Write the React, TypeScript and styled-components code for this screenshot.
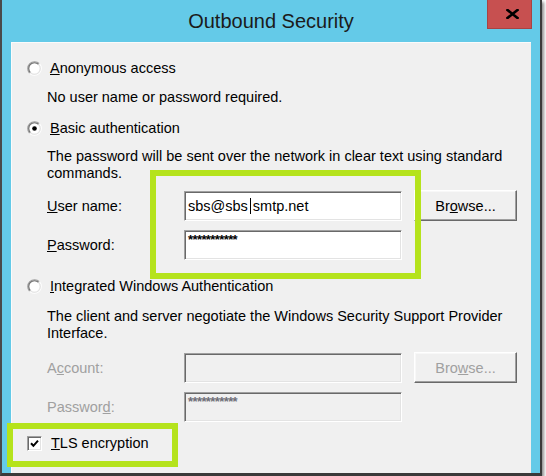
import React from "react";
import styled, { createGlobalStyle } from "styled-components";

const GlobalStyle = createGlobalStyle`
  html, body { margin: 0; padding: 0; background: #ffffff; }
  body { font-family: "Liberation Sans", Arial, sans-serif; }
  * { box-sizing: border-box; }
`;

const Page = styled.div`
  position: relative;
  width: 546px;
  height: 476px;
  overflow: hidden;
  background: #ffffff;
`;

const Window = styled.div`
  width: 542px;
  height: 476px;
  display: flex;
  flex-direction: column;
  background: #64cae8;
  border-left: 2px solid #4a4a4a;
  border-right: 2px solid #3a3a3a;
  border-bottom: 3px solid #3a3a3a;
  padding: 0 9px;
  box-shadow: 2px 2px 3px rgba(0, 0, 0, 0.45);
`;

const TitleBar = styled.div`
  height: 42px;
  flex: none;
  display: grid;
  grid-template-columns: 1fr auto 1fr;
  align-items: start;
`;

const Title = styled.div`
  grid-column: 2;
  font-size: 20px;
  line-height: 43px;
  color: #1b1b1b;
  white-space: nowrap;
`;

const CloseButton = styled.div`
  grid-column: 3;
  justify-self: end;
  margin-right: -1px;
  width: 45px;
  height: 29px;
  background: #c75050;
  border: 1px solid #a84343;
  border-top: none;
  display: flex;
  align-items: center;
  justify-content: center;
  padding-left: 5px;
`;

const Client = styled.div`
  flex: 1;
  background: #f0f0f0;
  box-shadow: inset 1px 1px 0 #fbfbfb;
  padding: 16px 0 0 16px;
  display: flex;
  flex-direction: column;
  color: #000;
  font-size: 14.5px;
`;

const OptionRow = styled.div<{ $mt?: number }>`
  display: flex;
  align-items: center;
  gap: 8px;
  height: 20px;
  line-height: 20px;
  margin-top: ${(p) => p.$mt ?? 0}px;
  white-space: nowrap;
`;

const Description = styled.div<{ $mt: number }>`
  margin-top: ${(p) => p.$mt}px;
  margin-left: 20px;
  width: 482px;
  line-height: 17px;
`;

const FieldRow = styled.div<{ $mt: number }>`
  margin-top: ${(p) => p.$mt}px;
  margin-left: 20px;
  display: grid;
  grid-template-columns: 137px 218px 115px;
  align-items: center;
  height: 30px;
`;

const FieldLabel = styled.div<{ $disabled?: boolean }>`
  color: ${(p) => (p.$disabled ? "#a0a0a0" : "#000")};
  white-space: nowrap;
`;

const TextBox = styled.div<{ $disabled?: boolean; $secret?: boolean }>`
  height: 30px;
  background: ${(p) => (p.$disabled ? "#f0f0f0" : "#ffffff")};
  border-top: 1px solid #a0a0a0;
  border-left: 1px solid #a0a0a0;
  border-bottom: 1px solid #ffffff;
  border-right: 1px solid #ffffff;
  box-shadow: inset 1px 1px 0 #696969, inset -1px -1px 0 #e3e3e3;
  padding: ${(p) => (p.$secret ? "2px 3px 0" : "0 3px")};
  display: flex;
  align-items: ${(p) => (p.$secret ? "flex-start" : "center")};
  white-space: nowrap;
`;

const Secret = styled.span<{ $disabled?: boolean }>`
  font-size: 13px;
  line-height: 13px;
  font-weight: bold;
  letter-spacing: -0.6px;
  color: ${(p) => (p.$disabled ? "#6f6f78" : "#000")};
`;

const Caret = styled.span`
  display: inline-block;
  width: 1px;
  height: 16px;
  background: #000;
  margin: 0 2px 0 2px;
  vertical-align: middle;
`;

const Button = styled.div<{ $disabled?: boolean }>`
  margin-left: 12px;
  width: 103px;
  height: 31px;
  background: #f0f0f0;
  border-top: 1px solid #ffffff;
  border-left: 1px solid #ffffff;
  border-bottom: 1px solid #696969;
  border-right: 1px solid #696969;
  box-shadow: inset -1px -1px 0 #a0a0a0, inset 1px 1px 0 #f8f8f8;
  display: flex;
  align-items: center;
  justify-content: center;
  color: ${(p) => (p.$disabled ? "#a0a0a0" : "#000")};
`;

const CheckBox = styled.span`
  width: 15px;
  height: 15px;
  flex: none;
  background: #fff;
  border-top: 1px solid #a0a0a0;
  border-left: 1px solid #a0a0a0;
  border-bottom: 1px solid #ffffff;
  border-right: 1px solid #ffffff;
  box-shadow: inset 1px 1px 0 #696969, inset -1px -1px 0 #e3e3e3;
  display: flex;
  align-items: center;
  justify-content: center;
`;

const CheckLabel = styled.span`
  margin-left: 1px;
`;

const Highlight = styled.div<{ $x: number; $y: number; $w: number; $h: number }>`
  position: absolute;
  left: ${(p) => p.$x}px;
  top: ${(p) => p.$y}px;
  width: ${(p) => p.$w}px;
  height: ${(p) => p.$h}px;
  border: 6px solid #b5e31c;
  pointer-events: none;
`;

const Radio: React.FC<{ checked?: boolean }> = ({ checked }) => (
  <svg width="15" height="15" viewBox="0 0 13 13" style={{ flex: "none" }}>
    <path d="M2.26 10.74 A6 6 0 0 1 10.74 2.26" fill="none" stroke="#a0a0a0" strokeWidth="1" />
    <path d="M10.74 2.26 A6 6 0 0 1 2.26 10.74" fill="none" stroke="#ffffff" strokeWidth="1" />
    <circle cx="6.5" cy="6.5" r="4.6" fill="#ffffff" />
    <path d="M2.96 10.04 A5 5 0 0 1 10.04 2.96" fill="none" stroke="#6f6f6f" strokeWidth="1" />
    <path d="M10.04 2.96 A5 5 0 0 1 2.96 10.04" fill="none" stroke="#e3e3e3" strokeWidth="1" />
    {checked && <circle cx="6.5" cy="6.5" r="2" fill="#000" />}
  </svg>
);

export default function App() {
  return (
    <>
      <GlobalStyle />
      <Page>
        <Window>
          <TitleBar>
            <Title>Outbound Security</Title>
            <CloseButton>
              <svg width="13" height="10" viewBox="0 0 13 10">
                <path d="M1.5 1 L11.5 9 M11.5 1 L1.5 9" stroke="#000" strokeWidth="2.6" strokeLinecap="square" />
              </svg>
            </CloseButton>
          </TitleBar>
          <Client>
            <OptionRow>
              <Radio />
              <span><u>A</u>nonymous access</span>
            </OptionRow>
            <Description $mt={11}>No user name or password required.</Description>

            <OptionRow $mt={12}>
              <Radio checked />
              <span><u>B</u>asic authentication</span>
            </OptionRow>
            <Description $mt={10}>
              The password will be sent over the network in clear text using standard commands.
            </Description>
            <FieldRow $mt={8}>
              <FieldLabel><u>U</u>ser name:</FieldLabel>
              <TextBox>
                sbs@sbs<Caret />smtp.net
              </TextBox>
              <Button>Br<u>o</u>wse...</Button>
            </FieldRow>
            <FieldRow $mt={10}>
              <FieldLabel><u>P</u>assword:</FieldLabel>
              <TextBox $secret>
                <Secret>***********</Secret>
              </TextBox>
            </FieldRow>

            <OptionRow $mt={16}>
              <Radio />
              <span><u>I</u>ntegrated Windows Authentication</span>
            </OptionRow>
            <Description $mt={12}>
              The client and server negotiate the Windows Security Support Provider Interface.
            </Description>
            <FieldRow $mt={10}>
              <FieldLabel $disabled>A<u>c</u>count:</FieldLabel>
              <TextBox $disabled />
              <Button $disabled>Bro<u>w</u>se...</Button>
            </FieldRow>
            <FieldRow $mt={10}>
              <FieldLabel $disabled>Passwor<u>d</u>:</FieldLabel>
              <TextBox $disabled $secret>
                <Secret $disabled>***********</Secret>
              </TextBox>
            </FieldRow>

            <OptionRow $mt={11}>
              <CheckBox>
                <svg width="9" height="9" viewBox="0 0 9 9">
                  <path d="M1 4.3 L3.4 6.8 L8 1.6" fill="none" stroke="#000" strokeWidth="2" />
                </svg>
              </CheckBox>
              <CheckLabel><u>T</u>LS encryption</CheckLabel>
            </OptionRow>
          </Client>
        </Window>
        <Highlight $x={150} $y={170} $w={271} $h={109} />
        <Highlight $x={7} $y={423} $w={171} $h={44} />
      </Page>
    </>
  );
}
